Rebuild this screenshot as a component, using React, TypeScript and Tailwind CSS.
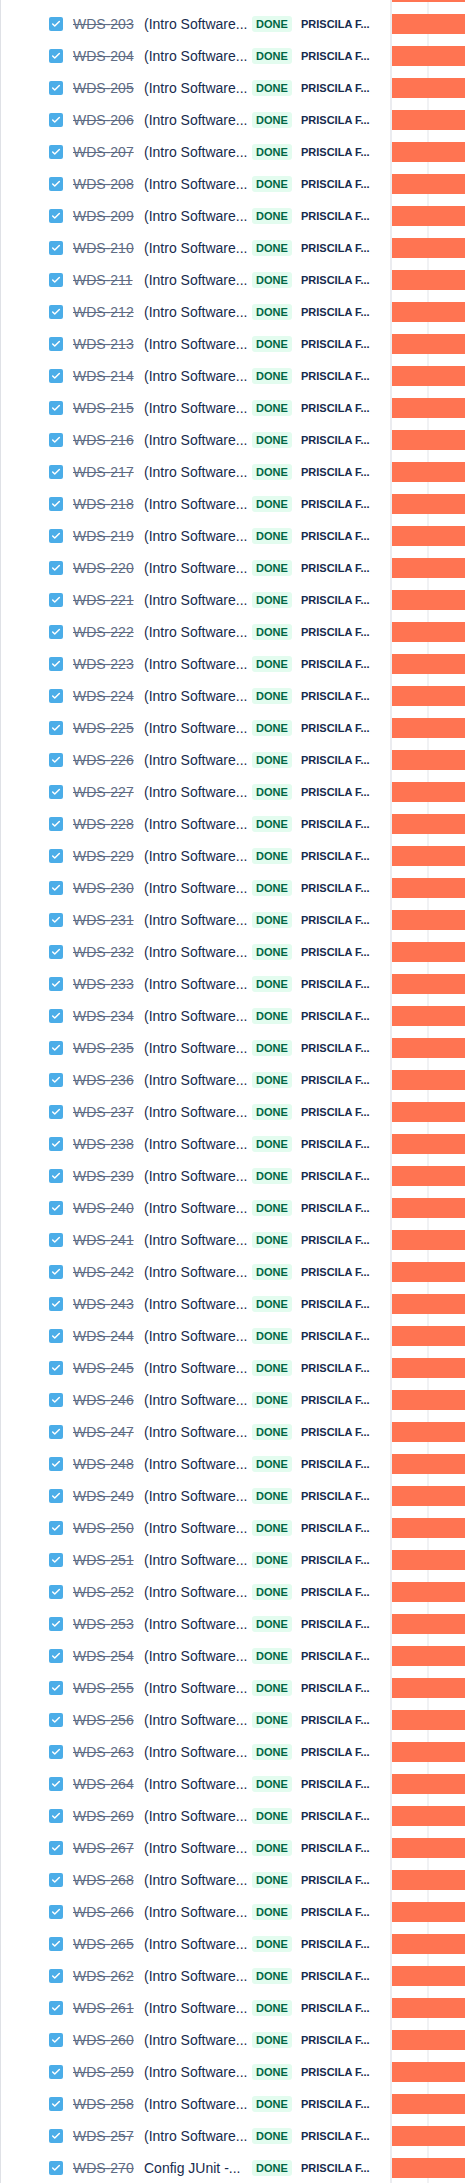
import { Check } from "lucide-react";

const ids = [
  ...Array.from({ length: 54 }, (_, i) => 203 + i),
  263, 264, 269, 267, 268, 266, 265, 262, 261, 260, 259, 258, 257, 270,
];

const gridBg =
  "bg-[linear-gradient(to_right,transparent_35px,#f1f2f4_35px,#f1f2f4_37px,transparent_37px)]";

const Row = ({ id }: { id: number }) => {
  const summary = id === 270 ? "Config JUnit -..." : "(Intro Software...";
  return (
    <div className="flex h-8">
      <div className="flex w-[390px] shrink-0 items-center border-l border-[#dfe1e6] pl-[48px]">
        <span className="flex h-[14px] w-[14px] items-center justify-center rounded-[2px] bg-[#4bade8]">
          <Check className="h-[10px] w-[10px] text-white" strokeWidth={3.5} />
        </span>
        <span className="ml-[10px] w-[71px] text-[14px] text-[#5e6c84] line-through">
          WDS-{id}
        </span>
        <span className="w-[108px] whitespace-nowrap text-[14px] text-[#172b4d]">{summary}</span>
        <span className="flex h-4 w-10 items-center justify-center rounded-[3px] bg-[#e3fcef] text-[11px] font-bold text-[#006644]">
          DONE
        </span>
        <span className="ml-[9px] whitespace-nowrap text-[11px] font-bold text-[#172b4d]">
          PRISCILA F...
        </span>
      </div>
      <div className={`flex-1 border-l-2 border-[#ebecf0] pt-[6px] ${gridBg}`}>
        <div className="h-5 bg-[#ff7452]" />
      </div>
    </div>
  );
};

export default function App() {
  return (
    <div className="w-[465px] bg-white font-['Liberation_Sans',Arial,sans-serif]">
      <div className="flex h-2">
        <div className="w-[390px] shrink-0 border-l border-[#dfe1e6]" />
        <div className={`flex-1 border-l-2 border-[#ebecf0] ${gridBg}`}>
          <div className="h-[2px] bg-[#ff7452]" />
        </div>
      </div>
      {ids.map((id) => (
        <Row key={id} id={id} />
      ))}
    </div>
  );
}
